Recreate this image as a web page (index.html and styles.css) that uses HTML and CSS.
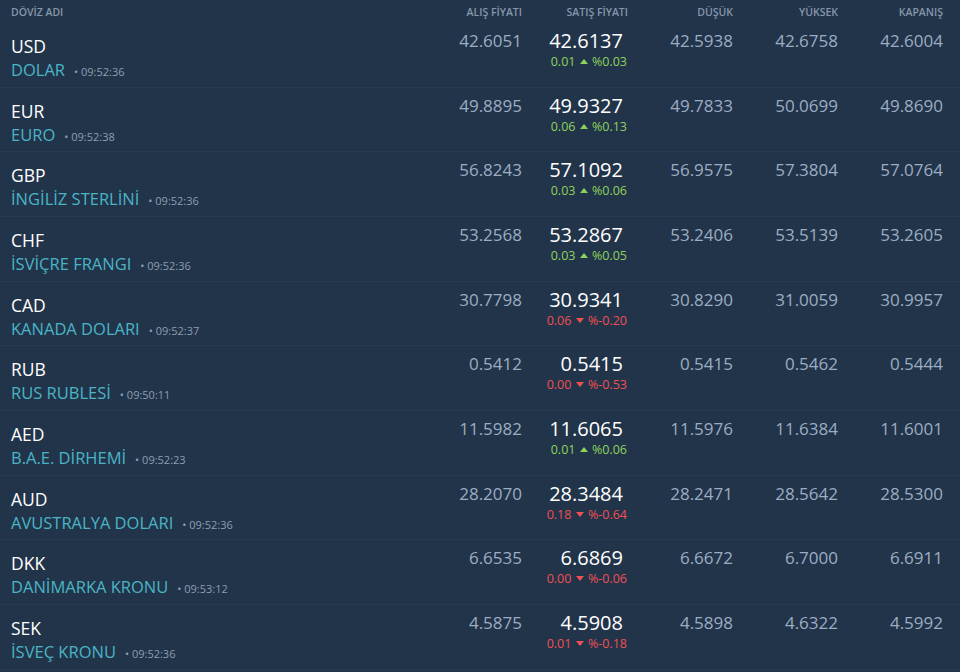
FILE: index.html
```html
<!DOCTYPE html>
<html lang="tr">
<head>
<meta charset="utf-8">
<title>Döviz</title>
<link rel="stylesheet" href="styles.css">
</head>
<body>
<div class="board">
  <div class="row head">
    <div class="name-col">DÖVİZ ADI</div>
    <div class="num">ALIŞ FİYATI</div>
    <div class="num">SATIŞ FİYATI</div>
    <div class="num">DÜŞÜK</div>
    <div class="num">YÜKSEK</div>
    <div class="num">KAPANIŞ</div>
  </div>

  <div class="row">
    <div class="name-col"><div class="code">USD</div><div class="line"><span class="cname">DOLAR</span><span class="time">• 09:52:36</span></div></div>
    <div class="num">42.6051</div>
    <div class="num sell"><div class="big">42.6137</div><div class="chg up">0.01 <i class="tri"></i> %0.03</div></div>
    <div class="num">42.5938</div><div class="num">42.6758</div><div class="num">42.6004</div>
  </div>

  <div class="row">
    <div class="name-col"><div class="code">EUR</div><div class="line"><span class="cname">EURO</span><span class="time">• 09:52:38</span></div></div>
    <div class="num">49.8895</div>
    <div class="num sell"><div class="big">49.9327</div><div class="chg up">0.06 <i class="tri"></i> %0.13</div></div>
    <div class="num">49.7833</div><div class="num">50.0699</div><div class="num">49.8690</div>
  </div>

  <div class="row">
    <div class="name-col"><div class="code">GBP</div><div class="line"><span class="cname">İNGİLİZ STERLİNİ</span><span class="time">• 09:52:36</span></div></div>
    <div class="num">56.8243</div>
    <div class="num sell"><div class="big">57.1092</div><div class="chg up">0.03 <i class="tri"></i> %0.06</div></div>
    <div class="num">56.9575</div><div class="num">57.3804</div><div class="num">57.0764</div>
  </div>

  <div class="row">
    <div class="name-col"><div class="code">CHF</div><div class="line"><span class="cname">İSVİÇRE FRANGI</span><span class="time">• 09:52:36</span></div></div>
    <div class="num">53.2568</div>
    <div class="num sell"><div class="big">53.2867</div><div class="chg up">0.03 <i class="tri"></i> %0.05</div></div>
    <div class="num">53.2406</div><div class="num">53.5139</div><div class="num">53.2605</div>
  </div>

  <div class="row">
    <div class="name-col"><div class="code">CAD</div><div class="line"><span class="cname">KANADA DOLARI</span><span class="time">• 09:52:37</span></div></div>
    <div class="num">30.7798</div>
    <div class="num sell"><div class="big">30.9341</div><div class="chg down">0.06 <i class="tri"></i> %-0.20</div></div>
    <div class="num">30.8290</div><div class="num">31.0059</div><div class="num">30.9957</div>
  </div>

  <div class="row">
    <div class="name-col"><div class="code">RUB</div><div class="line"><span class="cname">RUS RUBLESİ</span><span class="time">• 09:50:11</span></div></div>
    <div class="num">0.5412</div>
    <div class="num sell"><div class="big">0.5415</div><div class="chg down">0.00 <i class="tri"></i> %-0.53</div></div>
    <div class="num">0.5415</div><div class="num">0.5462</div><div class="num">0.5444</div>
  </div>

  <div class="row">
    <div class="name-col"><div class="code">AED</div><div class="line"><span class="cname">B.A.E. DİRHEMİ</span><span class="time">• 09:52:23</span></div></div>
    <div class="num">11.5982</div>
    <div class="num sell"><div class="big">11.6065</div><div class="chg up">0.01 <i class="tri"></i> %0.06</div></div>
    <div class="num">11.5976</div><div class="num">11.6384</div><div class="num">11.6001</div>
  </div>

  <div class="row">
    <div class="name-col"><div class="code">AUD</div><div class="line"><span class="cname">AVUSTRALYA DOLARI</span><span class="time">• 09:52:36</span></div></div>
    <div class="num">28.2070</div>
    <div class="num sell"><div class="big">28.3484</div><div class="chg down">0.18 <i class="tri"></i> %-0.64</div></div>
    <div class="num">28.2471</div><div class="num">28.5642</div><div class="num">28.5300</div>
  </div>

  <div class="row">
    <div class="name-col"><div class="code">DKK</div><div class="line"><span class="cname">DANİMARKA KRONU</span><span class="time">• 09:53:12</span></div></div>
    <div class="num">6.6535</div>
    <div class="num sell"><div class="big">6.6869</div><div class="chg down">0.00 <i class="tri"></i> %-0.06</div></div>
    <div class="num">6.6672</div><div class="num">6.7000</div><div class="num">6.6911</div>
  </div>

  <div class="row">
    <div class="name-col"><div class="code">SEK</div><div class="line"><span class="cname">İSVEÇ KRONU</span><span class="time">• 09:52:36</span></div></div>
    <div class="num">4.5875</div>
    <div class="num sell"><div class="big">4.5908</div><div class="chg down">0.01 <i class="tri"></i> %-0.18</div></div>
    <div class="num">4.5898</div><div class="num">4.6322</div><div class="num">4.5992</div>
  </div>
</div>
</body>
</html>
```

FILE: styles.css
```css
html, body {
  margin: 0;
  padding: 0;
  background: #22344a;
}
body {
  width: 960px;
  height: 672px;
  overflow: hidden;
  font-family: "Open Sans", "DejaVu Sans", sans-serif;
  color: #9cadc2;
}
.board {
  display: flex;
  flex-direction: column;
}
.row {
  display: grid;
  grid-template-columns: 416px 106px 106px 105px 105px 105px;
  height: 64.67px;
  box-sizing: border-box;
  border-bottom: 1px solid rgba(255, 255, 255, 0.03);
  padding-right: 17px;
}
.row.head {
  height: 23px;
  border-bottom: none;
  font-weight: 600;
  color: #8696ab;
  align-items: start;
}
.row.head .name-col,
.row.head .num {
  padding-top: 1px;
  font-size: 10.5px;
  line-height: 23px;
}
.name-col {
  padding-left: 11px;
  padding-top: 12px;
}
.code {
  font-size: 17.5px;
  line-height: 23px;
  color: #ffffff;
}
.line {
  display: flex;
  align-items: baseline;
  line-height: 24px;
}
.cname {
  font-size: 16.5px;
  color: #4ab4c6;
}
.time {
  font-size: 11px;
  color: #8d9db2;
  margin-left: 9px;
}
.num {
  text-align: right;
  font-size: 17px;
  line-height: 22px;
  padding-top: 7px;
}
.sell {
  padding-top: 6px;
}
.big {
  font-size: 20px;
  line-height: 24px;
  color: #ffffff;
  padding-right: 5px;
}
.chg {
  font-size: 12.5px;
  line-height: 18px;
  padding-right: 1px;
}
.chg.up { color: #8dd35b; }
.chg.down { color: #f04f54; }
.tri {
  display: inline-block;
  width: 0;
  height: 0;
  border-left: 4px solid transparent;
  border-right: 4px solid transparent;
  vertical-align: 2px;
  margin: 0 1px;
}
.up .tri { border-bottom: 5px solid #8dd35b; }
.down .tri { border-top: 5px solid #f04f54; }
```
